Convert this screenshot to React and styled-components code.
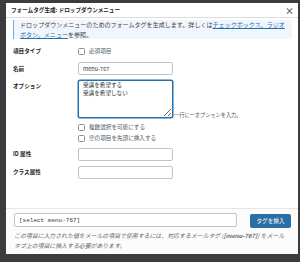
import React from 'react'
import styled, {createGlobalStyle} from 'styled-components'

const GlobalStyle = createGlobalStyle`
    html, body {
        margin: 0;
        padding: 0;
        background: #3c3c3c;
    }
    body {
        font-family: "Noto Sans CJK JP", "Noto Sans", "Liberation Sans", sans-serif;
        color: #1d2327;
    }
`

const App = () => {
    return (
        <Page>
            <GlobalStyle />
            <Modal>
                <TitleBar>
                    <Title>フォームタグ生成: ドロップダウンメニュー</Title>
                    <Close>×</Close>
                </TitleBar>

                <Content>
                    <Notice>
                        ドロップダウンメニューのためのフォームタグを生成します。詳しくは<a>チェックボックス、ラジオ<br />ボタン、メニュー</a>を参照。
                    </Notice>

                    <Row mt={7}>
                        <Label>項目タイプ</Label>
                        <Check><Box />必須項目</Check>
                    </Row>

                    <Row mt={6}>
                        <Label pt={2}>名前</Label>
                        <Input value="menu-767" readOnly />
                    </Row>

                    <Row mt={5}>
                        <Label pt={1}>オプション</Label>
                        <Field>
                            <TextArea value={'受講を希望する\n受講を希望しない'} readOnly />
                            <Hint>一行に一オプションを入力。</Hint>
                        </Field>
                    </Row>

                    <Row mt={4}>
                        <Label />
                        <Check><Box />複数選択を可能にする</Check>
                    </Row>
                    <Row mt={1}>
                        <Label />
                        <Check><Box />空の項目を先頭に挿入する</Check>
                    </Row>

                    <Row mt={5}>
                        <Label pt={1}>ID 属性</Label>
                        <Input readOnly />
                    </Row>
                    <Row mt={5}>
                        <Label pt={1}>クラス属性</Label>
                        <Input readOnly />
                    </Row>
                </Content>

                <Footer>
                    <InsertRow>
                        <TagInput value="[select menu-767]" readOnly />
                        <Button>タグを挿入</Button>
                    </InsertRow>
                    <Desc>
                        この項目に入力された値をメールの項目で使用するには、対応するメールタグ (<b>[menu-767]</b>) をメール<br />タブ上の項目に挿入する必要があります。
                    </Desc>
                </Footer>
            </Modal>
        </Page>
    )
}

export default App


const Page = styled.div`
    width: 300px;
    height: 262px;
    padding: 3px 2px 0 6px;
    box-sizing: border-box;
`

const Modal = styled.div`
    width: 292px;
    height: 251px;
    background: #fff;
    display: flex;
    flex-direction: column;
`

const TitleBar = styled.div`
    height: 14px;
    border-bottom: 1px solid #dcdcde;
    display: flex;
    align-items: center;
    justify-content: space-between;
    padding: 0 4px 0 5px;
`

const Title = styled.div`
    font-size: 5.6px;
    font-weight: bold;
    color: #1d2327;
`

const Close = styled.div`
    font-size: 9px;
    font-weight: bold;
    color: #666;
    line-height: 1;
`

const Content = styled.div`
    flex: 1;
    padding: 2px 6px 0 7px;
`

const Notice = styled.div`
    background: #f0f6fc;
    border-left: 1.5px solid #72aee6;
    padding: 0 2px 0 6px;
    font-size: 6.05px;
    line-height: 9.5px;
    white-space: nowrap;
    color: #3c434a;

    a {
        color: #2271b1;
        text-decoration: underline;
    }
`

const Row = styled.div`
    display: flex;
    align-items: flex-start;
    margin-top: ${props => props.mt}px;
`

const Label = styled.div`
    width: 65px;
    flex-shrink: 0;
    font-size: 5.6px;
    font-weight: bold;
    line-height: 10px;
    padding-top: ${props => props.pt || 0}px;
`

const Check = styled.label`
    display: flex;
    align-items: center;
    gap: 4px;
    height: 10px;
    font-size: 5.6px;
    color: #50575e;
`

const Box = styled.span`
    width: 5px;
    height: 5px;
    border: 1px solid #8c8f94;
    border-radius: 1.5px;
    background: #fff;
`

const Input = styled.input`
    width: 95px;
    height: 13px;
    box-sizing: border-box;
    border: 1px solid #c3c4c7;
    border-radius: 2px;
    padding: 0 4px;
    font-family: inherit;
    font-size: 5.6px;
    color: #2c3338;
    outline: none;
`

const Field = styled.div`
    display: flex;
    align-items: flex-end;
`

const TextArea = styled.textarea`
    width: 95px;
    height: 38px;
    box-sizing: border-box;
    border: 1px solid #2271b1;
    box-shadow: 0 0 0 0.5px #2271b1;
    border-radius: 2px;
    padding: 0 4px;
    font-family: inherit;
    font-size: 5.6px;
    line-height: 8px;
    color: #2c3338;
    resize: vertical;
    outline: none;
    overflow: hidden;
`

const Hint = styled.span`
    font-size: 5.2px;
    color: #50575e;
    margin-left: 1px;
    line-height: 7.5px;
`

const Footer = styled.div`
    height: 46px;
    border-top: 1px solid #e6e6e6;
    background: #fcfcfc;
    padding: 4px 7px 0 8px;
    box-sizing: border-box;
`

const InsertRow = styled.div`
    display: flex;
    align-items: flex-start;
    justify-content: space-between;
`

const TagInput = styled.input`
    width: 223px;
    height: 14px;
    box-sizing: border-box;
    border: 1px solid #c3c4c7;
    border-radius: 2px;
    padding: 0 4px;
    font-family: "Liberation Mono", "DejaVu Sans Mono", monospace;
    font-size: 6px;
    color: #2c3338;
    outline: none;
    background: #fff;
`

const Button = styled.button`
    width: 41px;
    height: 14px;
    margin-top: 1px;
    border: none;
    border-radius: 2px;
    background: #2a6ea3;
    color: #fff;
    font-family: inherit;
    font-size: 5.6px;
    padding: 0;
`

const Desc = styled.p`
    margin: 3px 0 0 0;
    font-size: 5.9px;
    line-height: 9.5px;
    font-style: italic;
    white-space: nowrap;
    color: #646970;

    b {
        font-weight: bold;
    }
`
